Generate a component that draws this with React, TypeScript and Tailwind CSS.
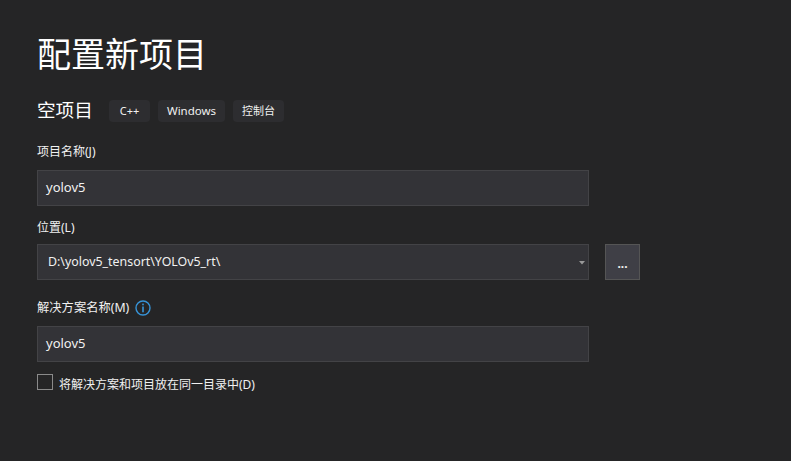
export default function App() {
  const font = "font-['Noto_Sans','Noto_Sans_CJK_SC',sans-serif]";
  const input = "h-[36px] bg-[#333337] border border-[#434346] flex items-center text-[13px] text-[#f1f1f1]";
  const chip = "h-[22px] rounded-[4px] bg-[#2d2d30] flex items-center justify-center -mt-[1px] pt-[1px]";
  return (
    <div className={`${font} w-[791px] h-[461px] bg-[#252526] overflow-hidden pl-[37px] text-[#f1f1f1]`}>
      <h1 className="text-[34px] leading-[46px] mt-[31px] h-[46px] font-normal text-white">配置新项目</h1>
      <div className="flex items-center mt-[21px] h-[26px]">
        <span className="text-[18.6px] leading-[26px] w-[72px] text-white -mt-[2px]">空项目</span>
        <span className={`${chip} w-[41px] text-[11px]`}>C++</span>
        <span className={`${chip} w-[67px] ml-[8px] text-[11.5px]`}>Windows</span>
        <span className={`${chip} w-[51px] ml-[8px] text-[11px]`}>控制台</span>
      </div>
      <div className="mt-[19px] h-[18px] text-[12px] leading-[18px]">项目名称(J)</div>
      <div className={`${input} w-[552px] mt-[9px] pl-[8px]`}>yolov5</div>
      <div className="mt-[13px] h-[18px] text-[12px] leading-[18px]">位置(L)</div>
      <div className="flex mt-[7px] gap-[16px]">
        <div className={`${input} w-[552px] pl-[10px] justify-between pr-[3px]`}>
          <span className="text-[12.4px]">D:\yolov5_tensort\YOLOv5_rt\</span>
          <svg width="6" height="4" viewBox="0 0 6 4" className="mt-[1px]"><path d="M0 0h6L3 3.5z" fill="#999" /></svg>
        </div>
        <div className="w-[35px] h-[36px] bg-[#3f3f46] border border-[#555] flex items-center justify-center text-[12px] font-bold leading-none pt-[3px]">...</div>
      </div>
      <div className="flex items-center mt-[19px] h-[18px] text-[12.3px] leading-[18px]">
        <span>解决方案名称(M)</span>
        <svg width="16" height="16" viewBox="0 0 16 16" className="ml-[6px]" fill="none">
          <circle cx="8" cy="8" r="7" stroke="#3794d8" strokeWidth="1.4" />
          <rect x="7.2" y="3.6" width="1.6" height="1.7" fill="#3794d8" />
          <rect x="7.2" y="6.5" width="1.6" height="5.8" fill="#3794d8" />
        </svg>
      </div>
      <div className={`${input} w-[552px] mt-[9px] pl-[8px]`}>yolov5</div>
      <div className="flex mt-[12px] items-start">
        <div className="w-[16px] h-[16px] border border-[#8a8a8a]" />
        <span className="ml-[6px] text-[12px] leading-[18px] mt-[2px]">将解决方案和项目放在同一目录中(D)</span>
      </div>
    </div>
  );
}
